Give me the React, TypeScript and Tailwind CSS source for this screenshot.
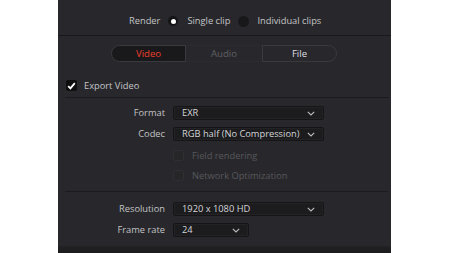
import React from "react";

const Chevron = () => (
  <svg width="8" height="5" viewBox="0 0 8 5" className="shrink-0">
    <path d="M0.8 0.8 L4 4 L7.2 0.8" fill="none" stroke="#bdbdc0" strokeWidth="1.1" />
  </svg>
);

const Dropdown = ({ text, width }: { text: string; width: string }) => (
  <div
    className={`${width} h-[14px] flex items-center justify-between pl-[8px] pr-[8px] rounded-[2px] bg-[#1c1c1f] border border-[#151517] shadow-[inset_0_0_0_1px_#232326] text-[9.3px] leading-none text-[#d4d4d6] whitespace-nowrap`}
  >
    <span>{text}</span>
    <Chevron />
  </div>
);

const Row = ({ label, children }: { label: string; children: React.ReactNode }) => (
  <div className="flex items-center h-[14px]">
    <div className="w-[107px] text-right text-[9.3px] leading-none text-[#c2c2c4] whitespace-nowrap">{label}</div>
    <div className="ml-[8px]">{children}</div>
  </div>
);

const DisabledCheck = ({ label }: { label: string }) => (
  <div className="flex items-center h-[11px] ml-[115px]">
    <div className="w-[11px] h-[11px] rounded-[2px] bg-[#262629] border border-[#2f2f33]" />
    <span className="ml-[8px] text-[9.3px] leading-none text-[#57575b] whitespace-nowrap">{label}</span>
  </div>
);

export default function App() {
  return (
    <div
      className="w-[450px] h-[253px] bg-white flex"
      style={{ fontFamily: '"Open Sans", "Noto Sans", sans-serif' }}
    >
      <div className="ml-[58px] w-[333px] h-full bg-[#28282c] flex flex-col">
        {/* Render row */}
        <div className="h-[36px] border-b border-[#19191b] flex items-start pt-[14px] pl-[71px] text-[9.3px] leading-[14px] text-[#c4c4c6] whitespace-nowrap">
          <span>Render</span>
          <div className="ml-[8px] mt-[2px] w-[10px] h-[10px] rounded-full bg-[#141416] flex items-center justify-center">
            <div className="w-[5px] h-[5px] rounded-full bg-white" />
          </div>
          <span className="ml-[9px]">Single clip</span>
          <div className="ml-[8px] mt-[1.5px] w-[11px] h-[11px] rounded-full bg-[#18181a]" />
          <span className="ml-[8px]">Individual clips</span>
        </div>

        {/* Tabs */}
        <div className="mt-[9px] ml-[53px] w-[226px] h-[17px] flex text-[9.6px] leading-none">
          <div className="w-[75px] h-full rounded-l-full bg-[#19191b] border border-[#3a3a3e] flex items-center justify-center text-[#ee3d2c] font-medium">
            Video
          </div>
          <div className="w-[76px] h-full border-y border-[#2c2c30] flex items-center justify-center text-[#5f5f63]">
            Audio
          </div>
          <div className="w-[75px] h-full rounded-r-full border border-[#3a3a3e] flex items-center justify-center text-[#dedee0] font-medium">
            File
          </div>
        </div>

        {/* Export Video */}
        <div className="mt-[18px] ml-[8px] flex items-center h-[11px]">
          <div className="w-[11px] h-[11px] rounded-[2px] bg-[#0e0e0f] flex items-center justify-center">
            <svg width="9" height="8" viewBox="0 0 9 8">
              <path d="M1.2 4.2 L3.4 6.4 L7.8 1.2" fill="none" stroke="#ffffff" strokeWidth="1.8" />
            </svg>
          </div>
          <span className="ml-[7px] text-[9.3px] leading-none text-[#c4c4c6] whitespace-nowrap">Export Video</span>
        </div>

        <div className="mt-[6px] ml-[7px] mr-[2px] h-px bg-[#1b1b1d]" />

        <div className="mt-[8px] flex flex-col gap-[7px]">
          <Row label="Format">
            <Dropdown text="EXR" width="w-[151px]" />
          </Row>
          <Row label="Codec">
            <Dropdown text="RGB half (No Compression)" width="w-[151px]" />
          </Row>
        </div>

        <div className="mt-[9px] flex flex-col gap-[9px]">
          <DisabledCheck label="Field rendering" />
          <DisabledCheck label="Network Optimization" />
        </div>

        <div className="mt-[10px] ml-[7px] mr-[3px] h-px bg-[#1b1b1d]" />

        <div className="mt-[10px] flex flex-col gap-[7px]">
          <Row label="Resolution">
            <Dropdown text="1920 x 1080 HD" width="w-[151px]" />
          </Row>
          <Row label="Frame rate">
            <Dropdown text="24" width="w-[76px]" />
          </Row>
        </div>

        <div className="flex-1" />
        <div className="h-[7px] bg-gradient-to-b from-[#222225] to-[#1b1b1d]" />
      </div>
    </div>
  );
}
